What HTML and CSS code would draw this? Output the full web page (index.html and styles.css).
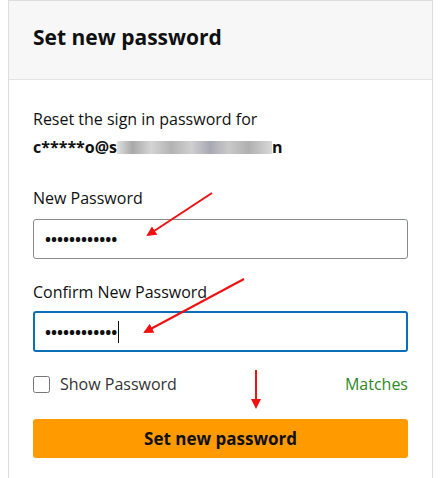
FILE: index.html
```html
<!DOCTYPE html>
<html>
<head>
    <meta charset="utf-8">
    <title>Set new password</title>
    <link rel="stylesheet" href="styles.css">
</head>
<body>
    <div class="card">
        <div class="card-header">
            <h1>Set new password</h1>
        </div>
        <form class="card-body">
            <p class="intro">Reset the sign in password for<br>
                <strong class="email">c*****o@s<span class="blur"></span>n</strong></p>

            <label for="pw">New Password</label>
            <input id="pw" class="field" type="password" value="abcdefghijkl">

            <label for="pw2" class="tight">Confirm New Password</label>
            <div class="field-wrap">
                <input id="pw2" class="field focused" type="password" value="abcdefghijkl">
                <span class="caret"></span>
            </div>

            <div class="options">
                <label class="check"><input type="checkbox"> Show Password</label>
                <span class="matches">Matches</span>
            </div>

            <button type="button" class="submit">Set new password</button>
        </form>
    </div>

    <!-- annotation arrows -->
    <svg class="marks" width="440" height="478" viewBox="0 0 440 478">
        <defs>
            <marker id="head" markerWidth="10" markerHeight="10" refX="8" refY="5" orient="auto" markerUnits="userSpaceOnUse">
                <path d="M0,0 L10,5 L0,10 Z" fill="#f01010"/>
            </marker>
        </defs>
        <line x1="212" y1="193" x2="148" y2="235" stroke="#f01010" stroke-width="2" marker-end="url(#head)"/>
        <line x1="244" y1="279" x2="145" y2="332" stroke="#f01010" stroke-width="2" marker-end="url(#head)"/>
        <line x1="256" y1="370" x2="256" y2="407" stroke="#f01010" stroke-width="2" marker-end="url(#head)"/>
    </svg>
</body>
</html>
```

FILE: styles.css
```css
body {
    font-family: "Open Sans", "Noto Sans", Arial, sans-serif;
    color: #0f1111;
    background-color: #fff;
    margin: 0;
    padding: 0;
}
.card {
    margin: 0 7px 0 8px;
    border: 1px solid #dddddd;
    border-bottom: none;
    height: 480px;
}
.card-header {
    background-color: #f7f7f7;
    border-bottom: 1px solid #e3e3e3;
    height: 79px;
    display: flex;
    align-items: center;
    padding: 0 24px 6px 24px;
    box-sizing: border-box;
}
.card-header h1 {
    font-size: 21px;
    font-weight: 700;
    margin: 0;
}
.card-body {
    padding: 25px 24px 0 24px;
    display: flex;
    flex-direction: column;
}
.intro {
    font-size: 16px;
    line-height: 28px;
    margin: 0 0 26px 0;
}
.email {
    font-weight: 700;
}
.blur {
    display: inline-block;
    width: 155px;
    height: 13px;
    vertical-align: -1px;
    background: linear-gradient(90deg, #e0e0e0, #a9a9a9 10%, #d4d4d4 22%, #b3b3b3 35%, #cfcfcf 48%, #a8a8b4 60%, #c9c9c9 72%, #b0b0b0 85%, #d8d8d8);
}
label {
    font-size: 16px;
    margin-bottom: 10px;
}
label.tight {
    margin-bottom: 8px;
}
.field {
    box-sizing: border-box;
    width: 100%;
    height: 40px;
    border: 1px solid #888c8c;
    border-radius: 3px;
    padding: 0 11px;
    font-size: 16px;
    font-weight: 700;
    font-family: inherit;
    color: #0f1111;
    margin: 0 0 22px 0;
}
.field-wrap {
    position: relative;
}
.field.focused {
    height: 41px;
    border: 2px solid #0a6fb8;
    padding: 0 10px;
    margin-bottom: 21px;
}
.caret {
    position: absolute;
    left: 85px;
    top: 10px;
    width: 1px;
    height: 22px;
    background-color: #0f1111;
}
.options {
    display: flex;
    justify-content: space-between;
    align-items: center;
    margin-bottom: 24px;
}
.check {
    display: flex;
    align-items: center;
    margin: 0;
    color: #333;
}
.check input {
    width: 17px;
    height: 17px;
    margin: 0 10px 0 0;
}
.matches {
    color: #2d8a1f;
    font-size: 16px;
}
.submit {
    height: 39px;
    background-color: #ff9a00;
    border: none;
    border-radius: 3px;
    font-family: inherit;
    font-size: 17px;
    font-weight: 700;
    color: #0f1111;
}
.marks {
    position: absolute;
    left: 0;
    top: 0;
    pointer-events: none;
}
```
